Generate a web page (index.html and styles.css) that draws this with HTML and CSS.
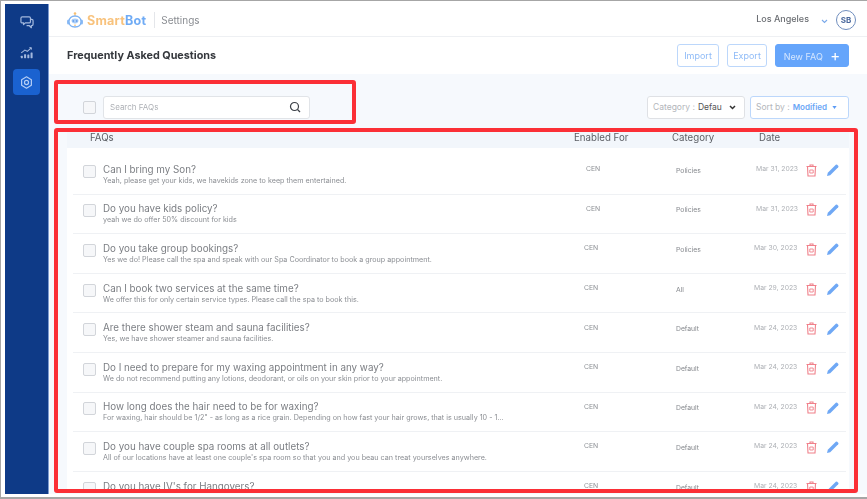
FILE: index.html
```html
<!DOCTYPE html>
<html>
<head>
  <title>SmartBot Settings</title>
  <link rel="stylesheet" href="styles.css">
</head>
<body>
  <div class="frame">
    <div class="app">
      <nav class="sidebar">
        <a class="nav-item">
          <svg width="14" height="13" viewBox="0 0 16 15" fill="none" stroke="#a3b8dd" stroke-width="1.400" stroke-linejoin="round"><path d="M2.500 1h8A1.500 1.500 0 0 1 12 2.500v4A1.500 1.500 0 0 1 10.500 8H6L4 10V8H2.500A1.500 1.500 0 0 1 1 6.500v-4A1.500 1.500 0 0 1 2.500 1z"/><path d="M12 4h1.500A1.500 1.500 0 0 1 15 5.500v4a1.500 1.500 0 0 1-1.500 1.500H13v2.500L10.500 11H7.500"/></svg>
        </a>
        <a class="nav-item">
          <svg width="13" height="13" viewBox="0 0 16 16" fill="#a3b8dd" stroke="#a3b8dd"><path d="M1.500 8.500L6 5l3 1.500L13.500 2.500" fill="none" stroke-width="1.300"/><path d="M11.500 2h2.500v2.500" fill="none" stroke-width="1.200"/><rect x="1" y="12" width="2.500" height="3" stroke="none" rx=".5"/><rect x="5" y="10" width="2.500" height="5" stroke="none" rx=".5"/><rect x="9" y="10.500" width="2.500" height="4.500" stroke="none" rx=".5"/><rect x="13" y="8" width="2.500" height="7" stroke="none" rx=".5"/></svg>
        </a>
        <a class="nav-item active">
          <svg width="13" height="13" viewBox="0 0 16 16" fill="none" stroke="#b4cdf5" stroke-width="1.500" stroke-linejoin="round"><path d="M8 1l6 3.500v7L8 15l-6-3.500v-7z"/><circle cx="8" cy="8" r="2.500"/></svg>
        </a>
      </nav>
      <div class="main">
        <header class="topbar">
          <svg class="logo" width="18" height="16" viewBox="0 0 18 16"><circle cx="9" cy="1.500" r="1.300" fill="#f8bf72"/><path d="M9 2.500V4" stroke="#f8bf72" stroke-width="1"/><rect x="1" y="7.500" width="3" height="5" rx="1.500" fill="#8dbcf5"/><rect x="14" y="7.500" width="3" height="5" rx="1.500" fill="#8dbcf5"/><path d="M9 4c3.500 0 6 2.300 6 5.500S13 15 9 15s-6-2.300-6-5.500S5.500 4 9 4z" fill="#fff" stroke="#7db2f3" stroke-width="1.300"/><path d="M5.500 8.500a3.500 2 0 0 1 7 0c0 2-1.500 3-3.500 3s-3.500-1-3.500-3z" fill="#a9cdf8"/><circle cx="7.300" cy="9" r=".8" fill="#4f8ee6"/><circle cx="10.700" cy="9" r=".8" fill="#4f8ee6"/><path d="M8 13.200h2" stroke="#f8bf72" stroke-width="1"/></svg>
          <div class="brand"><span class="brand-smart">Smart</span><span class="brand-bot">Bot</span></div>
          <div class="divider"></div>
          <div class="page-name">Settings</div>
          <div class="location">Los Angeles</div>
          <svg class="location-arrow" width="7" height="5" viewBox="0 0 7 5" fill="none" stroke="#7aa9ea" stroke-width="1.100"><path d="M1 1l2.500 2.500L6 1"/></svg>
          <div class="avatar">SB</div>
        </header>

        <div class="titlebar">
          <h1>Frequently Asked Questions</h1>
          <div class="actions">
            <button class="btn">Import</button>
            <button class="btn btn-export">Export</button>
            <button class="btn btn-primary">New FAQ <span class="plus">+</span></button>
          </div>
        </div>

        <div class="content">
          <div class="toolbar">
            <span class="check"></span>
            <div class="search">
              <span>Search FAQs</span>
              <svg width="12" height="12" viewBox="0 0 12 12" fill="none" stroke="#3b3f46" stroke-width="1.200"><circle cx="5.500" cy="5.500" r="4"/><path d="M8.500 8.500L11 11"/></svg>
            </div>
            <div class="select select-category">
              <span class="select-label">Category : </span><span class="select-value">Defau</span>
              <svg width="7" height="5" viewBox="0 0 7 5" fill="none" stroke="#333" stroke-width="1.500"><path d="M1 1l2.500 2.500L6 1"/></svg>
            </div>
            <div class="select select-sort">
              <span class="select-label">Sort by : </span><span class="select-modified">Modified</span>
              <svg width="5" height="3" viewBox="0 0 7 5" fill="#5b9bf5"><path d="M0 0h7L3.500 5z"/></svg>
            </div>
          </div>

          <div class="table">
            <div class="table-head">
              <span class="col-faq">FAQs</span>
              <span class="col-enabled">Enabled For</span>
              <span class="col-category">Category</span>
              <span class="col-date">Date</span>
            </div>

            <div class="row row-first">
              <span class="check"></span>
              <div class="faq"><div class="q">Can I bring my Son?</div><div class="a">Yeah, please get your kids, we havekids zone to keep them entertained.</div></div>
              <div class="enabled">CEN</div><div class="category">Policies</div><div class="date">Mar 31, 2023</div>
              <div class="row-icons">
                <svg class="trash" width="11" height="13" viewBox="0 0 11 13" fill="none" stroke="#f0808a" stroke-width="1.100"><path d="M.5 2.500h10M4 2.500V1h3v1.500M1.500 2.500l.5 9.500h7l.5-9.500"/><path d="M3.800 6h3.400v3H3.800z" stroke-width=".9"/></svg>
                <svg class="pencil" width="12" height="12" viewBox="0 0 12 12"><path d="M0 12l.8-3.200L8.800.8a1 1 0 0 1 1.400 0l1 1a1 1 0 0 1 0 1.400L3.200 11.200z" fill="#6fa8f5"/></svg>
              </div>
            </div>

            <div class="row row-first">
              <span class="check"></span>
              <div class="faq"><div class="q">Do you have kids policy?</div><div class="a">yeah we do offer 50% discount for kids</div></div>
              <div class="enabled">CEN</div><div class="category">Policies</div><div class="date">Mar 31, 2023</div>
              <div class="row-icons">
                <svg class="trash" width="11" height="13" viewBox="0 0 11 13" fill="none" stroke="#f0808a" stroke-width="1.100"><path d="M.5 2.500h10M4 2.500V1h3v1.500M1.500 2.500l.5 9.500h7l.5-9.500"/><path d="M3.800 6h3.400v3H3.800z" stroke-width=".9"/></svg>
                <svg class="pencil" width="12" height="12" viewBox="0 0 12 12"><path d="M0 12l.8-3.200L8.800.8a1 1 0 0 1 1.400 0l1 1a1 1 0 0 1 0 1.400L3.200 11.200z" fill="#6fa8f5"/></svg>
              </div>
            </div>

            <div class="row">
              <span class="check"></span>
              <div class="faq"><div class="q">Do you take group bookings?</div><div class="a">Yes we do! Please call the spa and speak with our Spa Coordinator to book a group appointment.</div></div>
              <div class="enabled">CEN</div><div class="category">Policies</div><div class="date">Mar 30, 2023</div>
              <div class="row-icons">
                <svg class="trash" width="11" height="13" viewBox="0 0 11 13" fill="none" stroke="#f0808a" stroke-width="1.100"><path d="M.5 2.500h10M4 2.500V1h3v1.500M1.500 2.500l.5 9.500h7l.5-9.500"/><path d="M3.800 6h3.400v3H3.800z" stroke-width=".9"/></svg>
                <svg class="pencil" width="12" height="12" viewBox="0 0 12 12"><path d="M0 12l.8-3.200L8.800.8a1 1 0 0 1 1.400 0l1 1a1 1 0 0 1 0 1.400L3.200 11.200z" fill="#6fa8f5"/></svg>
              </div>
            </div>

            <div class="row">
              <span class="check"></span>
              <div class="faq"><div class="q">Can I book two services at the same time?</div><div class="a">We offer this for only certain service types. Please call the spa to book this.</div></div>
              <div class="enabled">CEN</div><div class="category">All</div><div class="date">Mar 29, 2023</div>
              <div class="row-icons">
                <svg class="trash" width="11" height="13" viewBox="0 0 11 13" fill="none" stroke="#f0808a" stroke-width="1.100"><path d="M.5 2.500h10M4 2.500V1h3v1.500M1.500 2.500l.5 9.500h7l.5-9.500"/><path d="M3.800 6h3.400v3H3.800z" stroke-width=".9"/></svg>
                <svg class="pencil" width="12" height="12" viewBox="0 0 12 12"><path d="M0 12l.8-3.200L8.800.8a1 1 0 0 1 1.400 0l1 1a1 1 0 0 1 0 1.400L3.200 11.200z" fill="#6fa8f5"/></svg>
              </div>
            </div>

            <div class="row">
              <span class="check"></span>
              <div class="faq"><div class="q">Are there shower steam and sauna facilities?</div><div class="a">Yes, we have shower steamer and sauna facilities.</div></div>
              <div class="enabled">CEN</div><div class="category">Default</div><div class="date">Mar 24, 2023</div>
              <div class="row-icons">
                <svg class="trash" width="11" height="13" viewBox="0 0 11 13" fill="none" stroke="#f0808a" stroke-width="1.100"><path d="M.5 2.500h10M4 2.500V1h3v1.500M1.500 2.500l.5 9.500h7l.5-9.500"/><path d="M3.800 6h3.400v3H3.800z" stroke-width=".9"/></svg>
                <svg class="pencil" width="12" height="12" viewBox="0 0 12 12"><path d="M0 12l.8-3.200L8.800.8a1 1 0 0 1 1.400 0l1 1a1 1 0 0 1 0 1.400L3.200 11.200z" fill="#6fa8f5"/></svg>
              </div>
            </div>

            <div class="row">
              <span class="check"></span>
              <div class="faq"><div class="q">Do I need to prepare for my waxing appointment in any way?</div><div class="a">We do not recommend putting any lotions, deodorant, or oils on your skin prior to your appointment.</div></div>
              <div class="enabled">CEN</div><div class="category">Default</div><div class="date">Mar 24, 2023</div>
              <div class="row-icons">
                <svg class="trash" width="11" height="13" viewBox="0 0 11 13" fill="none" stroke="#f0808a" stroke-width="1.100"><path d="M.5 2.500h10M4 2.500V1h3v1.500M1.500 2.500l.5 9.500h7l.5-9.500"/><path d="M3.800 6h3.400v3H3.800z" stroke-width=".9"/></svg>
                <svg class="pencil" width="12" height="12" viewBox="0 0 12 12"><path d="M0 12l.8-3.200L8.800.8a1 1 0 0 1 1.400 0l1 1a1 1 0 0 1 0 1.400L3.200 11.200z" fill="#6fa8f5"/></svg>
              </div>
            </div>

            <div class="row">
              <span class="check"></span>
              <div class="faq"><div class="q">How long does the hair need to be for waxing?</div><div class="a">For waxing, hair should be 1/2" - as long as a rice grain. Depending on how fast your hair grows, that is usually 10 - 1...</div></div>
              <div class="enabled">CEN</div><div class="category">Default</div><div class="date">Mar 24, 2023</div>
              <div class="row-icons">
                <svg class="trash" width="11" height="13" viewBox="0 0 11 13" fill="none" stroke="#f0808a" stroke-width="1.100"><path d="M.5 2.500h10M4 2.500V1h3v1.500M1.500 2.500l.5 9.500h7l.5-9.500"/><path d="M3.800 6h3.400v3H3.800z" stroke-width=".9"/></svg>
                <svg class="pencil" width="12" height="12" viewBox="0 0 12 12"><path d="M0 12l.8-3.200L8.800.8a1 1 0 0 1 1.400 0l1 1a1 1 0 0 1 0 1.400L3.200 11.200z" fill="#6fa8f5"/></svg>
              </div>
            </div>

            <div class="row">
              <span class="check"></span>
              <div class="faq"><div class="q">Do you have couple spa rooms at all outlets?</div><div class="a">All of our locations have at least one couple's spa room so that you and you beau can treat yourselves anywhere.</div></div>
              <div class="enabled">CEN</div><div class="category">Default</div><div class="date">Mar 24, 2023</div>
              <div class="row-icons">
                <svg class="trash" width="11" height="13" viewBox="0 0 11 13" fill="none" stroke="#f0808a" stroke-width="1.100"><path d="M.5 2.500h10M4 2.500V1h3v1.500M1.500 2.500l.5 9.500h7l.5-9.500"/><path d="M3.800 6h3.400v3H3.800z" stroke-width=".9"/></svg>
                <svg class="pencil" width="12" height="12" viewBox="0 0 12 12"><path d="M0 12l.8-3.200L8.800.8a1 1 0 0 1 1.400 0l1 1a1 1 0 0 1 0 1.400L3.200 11.200z" fill="#6fa8f5"/></svg>
              </div>
            </div>

            <div class="row">
              <span class="check"></span>
              <div class="faq"><div class="q">Do you have IV's for Hangovers?</div><div class="a"></div></div>
              <div class="enabled">CEN</div><div class="category">Default</div><div class="date">Mar 24, 2023</div>
              <div class="row-icons">
                <svg class="trash" width="11" height="13" viewBox="0 0 11 13" fill="none" stroke="#f0808a" stroke-width="1.100"><path d="M.5 2.500h10M4 2.500V1h3v1.500M1.500 2.500l.5 9.500h7l.5-9.500"/><path d="M3.800 6h3.400v3H3.800z" stroke-width=".9"/></svg>
                <svg class="pencil" width="12" height="12" viewBox="0 0 12 12"><path d="M0 12l.8-3.200L8.800.8a1 1 0 0 1 1.400 0l1 1a1 1 0 0 1 0 1.400L3.200 11.200z" fill="#6fa8f5"/></svg>
              </div>
            </div>
          </div>
        </div>
      </div>
    </div>

    <div class="mark mark-search"></div>
    <div class="mark mark-table"></div>
  </div>
</body>
</html>
```

FILE: styles.css
```css
* {
  box-sizing: border-box;
}

body {
  margin: 0;
  background-color: #fff;
  font-family: Inter, "Open Sans", Arial, sans-serif;
  color: #555;
}

.frame {
  position: relative;
  width: 867px;
  height: 499px;
  overflow: hidden;
  border-top: 1px solid #a6a6a6;
  border-left: 1px solid #a6a6a6;
  border-bottom: 2px solid #a6a6a6;
  padding: 3px 0 3px 4px;
}

.app {
  display: flex;
  height: 100%;
  filter: blur(0.6px);
}

.sidebar {
  width: 44px;
  flex-shrink: 0;
  background-color: #0e3a87;
  border-right: 1px solid #7d9bd0;
  padding-top: 5px;
  display: flex;
  flex-direction: column;
  align-items: center;
  gap: 4px;
}

.nav-item {
  width: 27px;
  height: 26px;
  border-radius: 4px;
  display: flex;
  align-items: center;
  justify-content: center;
}

.nav-item.active {
  background-color: #1a62d0;
}

.main {
  flex: 1;
  min-width: 0;
  display: flex;
  flex-direction: column;
}

.topbar {
  height: 33px;
  flex-shrink: 0;
  border-bottom: 1px solid #eef0f3;
  display: flex;
  align-items: center;
  padding: 0 11px 0 17px;
}

.brand {
  margin-left: 3px;
  font-size: 12.500px;
  font-weight: 700;
  letter-spacing: 0.25px;
}

.brand-smart {
  color: #f8c27c;
}

.brand-bot {
  color: #6fabf5;
}

.divider {
  width: 1px;
  height: 16px;
  margin-left: 8px;
  background-color: #e4e6ea;
}

.page-name {
  margin-left: 6px;
  font-size: 10px;
  color: #8a8d92;
}

.location {
  margin-left: auto;
  margin-bottom: 4px;
  font-size: 9px;
  font-weight: 500;
  color: #6a6d72;
}

.location-arrow {
  margin-left: 12px;
  margin-top: 3px;
}

.avatar {
  width: 20px;
  height: 20px;
  margin-left: 8px;
  border: 1.500px solid #6f8dbd;
  border-radius: 50%;
  display: flex;
  align-items: center;
  justify-content: center;
  font-size: 8px;
  font-weight: 700;
  color: #4c6a9e;
}

.titlebar {
  height: 37px;
  flex-shrink: 0;
  display: flex;
  align-items: center;
  justify-content: space-between;
  padding: 0 18px;
}

h1 {
  margin: 0;
  font-size: 10.800px;
  font-weight: 700;
  color: #35383d;
}

.actions {
  display: flex;
  gap: 8px;
}

.btn {
  width: 42px;
  height: 23px;
  padding: 0;
  background-color: #fff;
  border: 1px solid #bcd7fb;
  border-radius: 3px;
  font-family: inherit;
  font-size: 9px;
  color: #8fbbf7;
}

.btn-export {
  width: 40px;
}

.btn-primary {
  width: 74px;
  background-color: #65a5fb;
  border-color: #65a5fb;
  color: #d5e6fe;
}

.plus {
  margin-left: 5px;
  font-size: 15px;
  line-height: 1;
  vertical-align: -1px;
  color: #fff;
}

.content {
  flex: 1;
  min-height: 0;
  background-color: #f6f9fd;
  padding: 0 18px;
  display: flex;
  flex-direction: column;
}

.toolbar {
  height: 54px;
  flex-shrink: 0;
  display: flex;
  align-items: center;
  padding: 12px 0 0 16px;
}

.check {
  width: 13px;
  height: 13px;
  flex-shrink: 0;
  background-color: #f6f7f9;
  border: 1px solid #d2d5da;
  border-radius: 2px;
}

.search {
  width: 207px;
  height: 23px;
  margin-left: 7px;
  padding: 0 8px 0 6px;
  background-color: #fff;
  border: 1px solid #e1e4e8;
  border-radius: 3px;
  display: flex;
  align-items: center;
  justify-content: space-between;
  font-size: 8px;
  color: #aeb1b6;
}

.select {
  height: 23px;
  background-color: #fff;
  border-radius: 3px;
  display: flex;
  align-items: center;
  font-size: 8.500px;
  white-space: nowrap;
}

.select-category {
  width: 98px;
  margin-left: auto;
  padding-left: 5px;
  border: 1px solid #dfe1e5;
}

.select-category svg {
  margin-left: 7px;
}

.select-sort {
  width: 99px;
  margin-left: 5px;
  padding-left: 5px;
  border: 1px solid #bcd7fb;
}

.select-sort svg {
  margin-left: 5px;
}

.select-label {
  color: #b3b6bb;
  margin-right: 3px;
}

.select-value {
  color: #555;
}

.select-modified {
  font-size: 8px;
  font-weight: 600;
  color: #69a6f6;
}

.table {
  flex: 1;
  min-height: 0;
  overflow: hidden;
  background-color: #fff;
  margin-bottom: 4px;
}

.table-head {
  height: 20px;
  background-color: #f2f6fb;
  font-size: 9.700px;
  color: #5d6066;
  display: grid;
  grid-template-columns: 484px 98px 87px 1fr;
  padding-left: 23px;
  align-items: center;
}

.table-head span {
  padding-bottom: 2px;
}

.row {
  height: 39.600px;
  margin-left: 6px;
  margin-right: 3px;
  border-bottom: 1px solid #eff1f4;
  display: grid;
  grid-template-columns: 20px 481px 92px 78px 52px 1fr;
  align-items: center;
  padding-left: 10px;
}

.table-head + .row {
  margin-top: 7px;
}

.row-first {
  grid-template-columns: 20px 483px 90px 80px 50px 1fr;
}

.row .check {
  margin-bottom: 6px;
}

.faq {
  min-width: 0;
  padding-bottom: 1px;
}

.q {
  font-size: 9.800px;
  line-height: 13px;
  color: #7b7e83;
}

.a {
  font-size: 7.200px;
  line-height: 9px;
  min-height: 9px;
  color: #8b8e93;
  white-space: nowrap;
}

.enabled,
.date {
  font-size: 6.800px;
  padding-bottom: 11px;
  color: #8a8d92;
}

.category {
  font-size: 6.800px;
  padding-bottom: 8px;
  color: #85888d;
}

.date {
  color: #adb0b5;
}

.row-icons {
  display: flex;
  align-items: center;
  gap: 10px;
  padding-bottom: 8px;
}

.mark {
  position: absolute;
  border: 4px solid #fb2f36;
  border-radius: 3px;
}

.mark-search {
  left: 53px;
  top: 79px;
  width: 302px;
  height: 44px;
}

.mark-table {
  left: 53px;
  top: 127px;
  width: 804px;
  height: 365px;
}
```
